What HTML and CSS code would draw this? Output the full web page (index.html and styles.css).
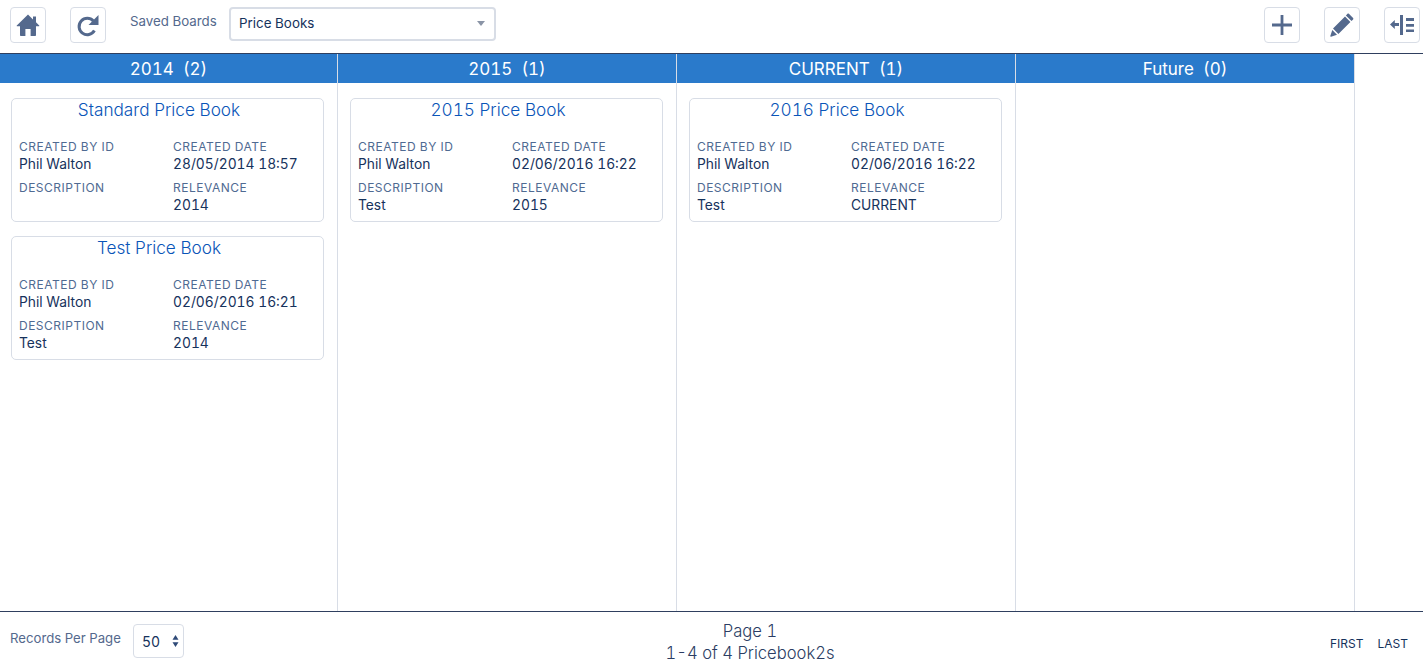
FILE: index.html
```html
<!DOCTYPE html>
<html lang="en">
<head>
<meta charset="utf-8">
<title>Price Books</title>
<link rel="stylesheet" href="styles.css">
</head>
<body>
<div class="page">
  <header class="toolbar">
    <div class="tools-left">
      <button class="icon-btn" aria-label="Home"><svg viewBox="0 0 24 24" width="24" height="24"><path d="M12 1.500.8 12.400c-.3.4-.1.9.4.9H4v9c0 .5.3.8.8.8h4.600V16h5.200v7.100h4.600c.5 0 .8-.3.8-.8v-9h2.800c.5 0 .7-.5.4-.9l-3.200-3.100V3.500h-3v2.900z"/></svg></button>
      <button class="icon-btn" aria-label="Refresh"><svg viewBox="0 0 24 24" width="24" height="24"><path class="stroke" d="M18.400 17.600a8.200 8.200 0 1 1-1-9.600"/><path d="M22.500 2v10H12.500z"/></svg></button>
      <label class="saved-label">Saved Boards</label>
      <div class="board-select"><span>Price Books</span><i class="caret"></i></div>
    </div>
    <div class="tools-right">
      <button class="icon-btn" aria-label="Add"><svg viewBox="0 0 24 24" width="24" height="24"><path class="stroke plus" d="M12 2v20M2 12h20"/></svg></button>
      <button class="icon-btn" aria-label="Edit"><svg viewBox="0 0 24 24" width="24" height="24"><path d="M17.500.8c.4-.4 1-.4 1.400 0l4.200 4.200c.4.4.4 1 0 1.400l-1.600 1.600-5.600-5.600zM15 3.600l5.400 5.400L8.400 21 3 15.600zM2.300 17l4.700 4.700-6 2.100c-.4.100-.8-.3-.7-.7z"/></svg></button>
      <button class="icon-btn" aria-label="Collapse"><svg viewBox="0 0 24 24" width="24" height="24"><path d="M10 2h3v20h-3zM16 5h8v3h-8zM16 11h8v2.700h-8zM16 16.500h8V19h-8zM0 11.500 4.800 7v3H9v3H4.800v3z"/></svg></button>
    </div>
  </header>

  <main class="board">
    <section class="col">
      <h2 class="col-head">2014&nbsp; (2)</h2>
      <div class="col-body">
        <article class="card">
          <h3 class="card-title">Standard Price Book</h3>
          <dl class="fields">
            <div><dt>Created By ID</dt><dd>Phil Walton</dd></div>
            <div><dt>Created Date</dt><dd>28/05/2014 18:57</dd></div>
            <div><dt>Description</dt><dd>&nbsp;</dd></div>
            <div><dt>Relevance</dt><dd>2014</dd></div>
          </dl>
        </article>
        <article class="card">
          <h3 class="card-title">Test Price Book</h3>
          <dl class="fields">
            <div><dt>Created By ID</dt><dd>Phil Walton</dd></div>
            <div><dt>Created Date</dt><dd>02/06/2016 16:21</dd></div>
            <div><dt>Description</dt><dd>Test</dd></div>
            <div><dt>Relevance</dt><dd>2014</dd></div>
          </dl>
        </article>
      </div>
    </section>
    <section class="col">
      <h2 class="col-head">2015&nbsp; (1)</h2>
      <div class="col-body">
        <article class="card">
          <h3 class="card-title">2015 Price Book</h3>
          <dl class="fields">
            <div><dt>Created By ID</dt><dd>Phil Walton</dd></div>
            <div><dt>Created Date</dt><dd>02/06/2016 16:22</dd></div>
            <div><dt>Description</dt><dd>Test</dd></div>
            <div><dt>Relevance</dt><dd>2015</dd></div>
          </dl>
        </article>
      </div>
    </section>
    <section class="col">
      <h2 class="col-head">CURRENT&nbsp; (1)</h2>
      <div class="col-body">
        <article class="card">
          <h3 class="card-title">2016 Price Book</h3>
          <dl class="fields">
            <div><dt>Created By ID</dt><dd>Phil Walton</dd></div>
            <div><dt>Created Date</dt><dd>02/06/2016 16:22</dd></div>
            <div><dt>Description</dt><dd>Test</dd></div>
            <div><dt>Relevance</dt><dd>CURRENT</dd></div>
          </dl>
        </article>
      </div>
    </section>
    <section class="col">
      <h2 class="col-head">Future&nbsp; (0)</h2>
      <div class="col-body"></div>
    </section>
  </main>

  <footer class="footer">
    <div class="per-page">
      <span class="per-label">Records Per Page</span>
      <div class="per-select"><span>50</span>
        <svg viewBox="0 0 8 14" width="7" height="12"><path d="M4 0l3.500 5.500h-7zM4 14 .5 8.500h7z"/></svg>
      </div>
    </div>
    <div class="pager-info">
      <div>Page 1</div>
      <div>1-4 of 4 Pricebook2s</div>
    </div>
    <nav class="pager-links"><a>First</a><a>Last</a></nav>
  </footer>
</div>
</body>
</html>
```

FILE: styles.css
```css
* { box-sizing: border-box; }
html, body { height: 100%; }
body {
  margin: 0;
  font-family: Inter, "Open Sans", "Liberation Sans", sans-serif;
  font-variant-numeric: tabular-nums;
  color: #16325c;
  background: #fff;
  overflow: hidden;
}
.page { height: 662px; display: flex; flex-direction: column; }

.toolbar {
  height: 54px;
  flex: none;
  display: flex;
  justify-content: space-between;
  padding: 7px 3px 0 10px;
  border-bottom: 1px solid #2f3f5f;
}
.tools-left, .tools-right { display: flex; align-items: flex-start; }
.tools-right { gap: 24px; }
.icon-btn {
  width: 36px;
  height: 36px;
  padding: 0;
  display: flex;
  align-items: center;
  justify-content: center;
  background: #fff;
  border: 1px solid #d8dde6;
  border-radius: 4px;
}
.tools-left .icon-btn { margin-right: 24px; }
.icon-btn svg { fill: #54698d; }
.icon-btn .stroke { fill: none; stroke: #54698d; stroke-width: 3; }
.icon-btn .plus { stroke-width: 2.800; }
.saved-label {
  font-size: 13.300px;
  color: #54698d;
  line-height: 18px;
  margin: 5px 12px 0 0;
  width: 87px;
  white-space: nowrap;
}
.board-select {
  width: 267px;
  height: 34px;
  border: 2px solid #d8dde6;
  border-radius: 4px;
  padding: 0 8px 2px;
  display: flex;
  align-items: center;
  justify-content: space-between;
  font-size: 13.400px;
  color: #16325c;
}
.caret {
  width: 0;
  height: 0;
  border-left: 4px solid transparent;
  border-right: 4px solid transparent;
  border-top: 5px solid #8a94a6;
  margin-right: 1px;
}

.board {
  flex: 1;
  min-height: 0;
  width: 1355px;
  display: grid;
  grid-template-columns: 338px 339px 339px 339px;
}
.col {
  display: flex;
  flex-direction: column;
  border-right: 1px solid #d8dde6;
  min-width: 0;
}
.col-head {
  margin: 0;
  height: 29px;
  background: #2a7acb;
  color: #fff;
  font-size: 17px;
  font-weight: 400;
  line-height: 29px;
  padding-top: 1px;
  text-align: center;
}
.col-body {
  flex: 1;
  padding: 15px 13px 0 0;
  display: flex;
  flex-direction: column;
  align-items: flex-end;
  gap: 14px;
}
.card {
  width: 313px;
  height: 124px;
  border: 1px solid #d8dde6;
  border-radius: 5px;
  padding: 0 7px;
}
.card-title {
  margin: 0 17px 0 0;
  font-size: 17.200px;
  font-weight: 300;
  line-height: 22px;
  color: #0a55b8;
  text-align: center;
}
.fields {
  margin: 17px 0 0;
  display: grid;
  grid-template-columns: 154px 1fr;
  row-gap: 6px;
}
.fields dt {
  font-size: 12px;
  letter-spacing: .5px;
  line-height: 18px;
  color: #4f6a92;
  text-transform: uppercase;
  white-space: nowrap;
}
.fields dd {
  margin: -1px 0 0;
  font-size: 13.800px;
  line-height: 18px;
  color: #16325c;
  white-space: nowrap;
}

.footer {
  height: 51px;
  flex: none;
  border-top: 1px solid #2f3f5f;
  display: grid;
  grid-template-columns: 550px 380px 1fr;
  padding: 0 15px 0 10px;
}
.per-page { display: flex; align-items: flex-start; padding-top: 12px; }
.per-label { font-size: 13.200px; line-height: 28px; color: #54698d; margin-right: 12px; white-space: nowrap; }
.per-select {
  width: 51px;
  height: 34px;
  border: 1px solid #d8dde6;
  border-radius: 4px;
  display: flex;
  align-items: center;
  justify-content: space-between;
  padding: 0 4px 0 8px;
  font-size: 14px;
}
.per-select svg { fill: #2f4a78; }
.pager-info {
  font-size: 16.600px;
  font-weight: 300;
  line-height: 21.500px;
  text-align: center;
  padding-top: 9px;
  color: #2b3d63;
}
.pager-links {
  display: flex;
  justify-content: flex-end;
  gap: 14px;
  padding-top: 24px;
  font-size: 12px;
  line-height: 16px;
  text-transform: uppercase;
  color: #16325c;
}
```
